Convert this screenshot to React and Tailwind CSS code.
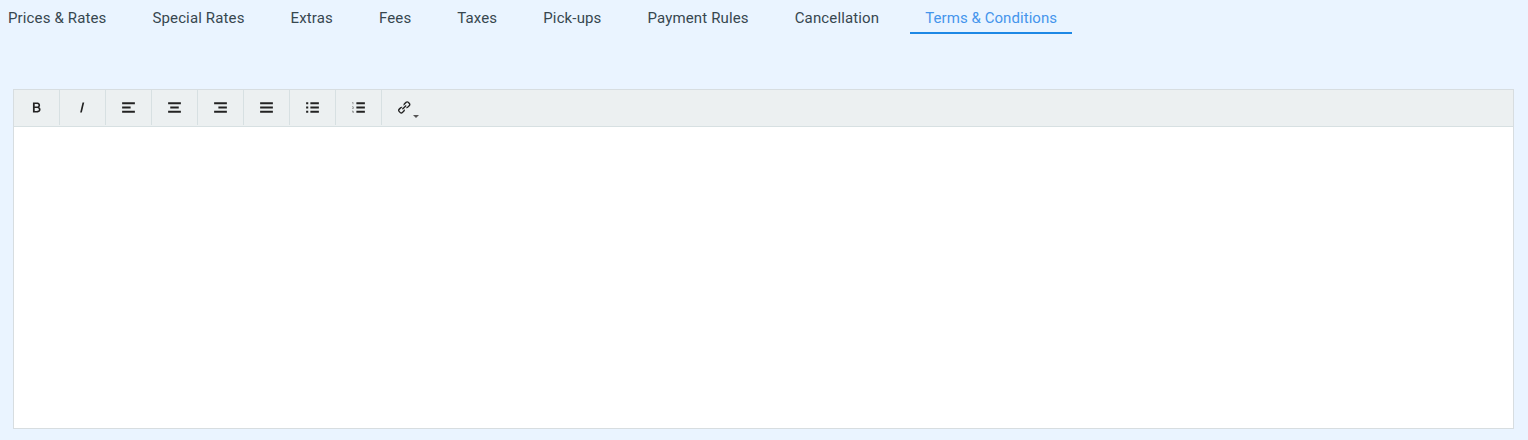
import React from "react";

const tabs = [
  "Prices & Rates",
  "Special Rates",
  "Extras",
  "Fees",
  "Taxes",
  "Pick-ups",
  "Payment Rules",
  "Cancellation",
  "Terms & Conditions",
];

const tools = [
  {
    name: "Bold",
    d: "M51.1 37.8c-1.1-1.4-2.5-2.5-4.2-3.3 1.2-.8 2.1-1.8 2.8-3 1-1.6 1.5-3.5 1.5-5.3 0-2-.6-4-1.7-5.8-1.1-1.8-2.8-3.2-4.8-4.1-2-.9-4.6-1.3-7.8-1.3h-16v42h16.3c2.6 0 4.8-.2 6.7-.7 1.9-.5 3.4-1.2 4.7-2.1 1.3-1 2.4-2.4 3.2-4.1.9-1.7 1.3-3.6 1.3-5.7.2-2.5-.5-4.7-2-6.6zM40.8 50.2c-.6.1-1.8.2-3.4.2h-9V38.5h8.3c2.5 0 4.4.2 5.6.6 1.2.4 2 1 2.7 2 .6.9 1 2 1 3.3 0 1.1-.2 2.1-.7 2.9-.5.9-1 1.5-1.7 1.9-.8.4-1.7.8-2.8 1zm2.6-20.4c-.5.7-1.3 1.3-2.5 1.6-.8.3-2.5.4-4.8.4h-7.7V21.6h7.1c1.4 0 2.6 0 3.6.1s1.7.2 2.2.4c1 .3 1.7.8 2.2 1.7.5.9.8 1.8.8 3-.1 1.3-.4 2.2-.9 3z",
  },
  { name: "Italic", d: "M26 57l10.1-42h7.2L33.2 57H26z" },
  { name: "Align left", d: "M9 14h54v8H9zM9 50h54v8H9zM9 32h36v8H9z" },
  { name: "Align center", d: "M9 14h54v8H9zM9 50h54v8H9zM18 32h36v8H18z" },
  { name: "Align right", d: "M9 14h54v8H9zM9 50h54v8H9zM27 32h36v8H27z" },
  { name: "Justify", d: "M9 14h54v8H9zM9 50h54v8H9zM9 32h54v8H9z" },
  {
    name: "Bulleted list",
    d: "M27 14h36v8H27zM27 50h36v8H27zM9 50h9v8H9zM9 32h9v8H9zM9 14h9v8H9zM27 32h36v8H27z",
  },
  {
    name: "Numbered list",
    d: "M27 14h36v8H27zM27 50h36v8H27zM27 32h36v8H27zM11.8 15.8V22h1.8v-7.8h-1.5l-2.1 1 .3 1.3zM12.1 38.5l.7-.6c1.1-1 2.1-2.1 2.1-3.4 0-1.4-1-2.4-2.7-2.4-1.1 0-2 .4-2.6.8l.5 1.3c.4-.3 1-.6 1.7-.6.9 0 1.3.5 1.3 1.1 0 .9-.9 1.8-2.6 3.3l-1 .9V40H15v-1.5h-2.9zM13.3 53.9c1-.4 1.4-1 1.4-1.8 0-1.1-.9-1.9-2.6-1.9-1 0-1.9.3-2.4.6l.4 1.3c.3-.2 1-.5 1.6-.5.8 0 1.2.3 1.2.8 0 .7-.8.9-1.4.9h-.7v1.3h.7c.8 0 1.6.3 1.6 1.1 0 .6-.5 1-1.4 1-.7 0-1.5-.3-1.8-.5l-.4 1.4c.5.3 1.3.6 2.3.6 2 0 3.2-1 3.2-2.4 0-1.1-.8-1.8-1.7-1.9z",
  },
  {
    name: "Link",
    menu: true,
    d: "M31.1 48.9l-6.7 6.7c-.8.8-1.6.9-2.1.9s-1.4-.1-2.1-.9L15 50.4c-1.1-1.1-1.1-3.1 0-4.2l6.1-6.1.2-.2 6.5-6.5c-1.2-.6-2.5-.9-3.8-.9-2.3 0-4.6.9-6.3 2.6L11 41.8c-3.5 3.5-3.5 9.2 0 12.7l5.2 5.2c1.7 1.7 4 2.6 6.3 2.6s4.6-.9 6.3-2.6l6.7-6.7c2.5-2.6 3.1-6.7 1.5-10l-5.9 5.9zM38.7 22.5l6.7-6.7c.8-.8 1.6-.9 2.1-.9s1.4.1 2.1.9l5.2 5.2c1.1 1.1 1.1 3.1 0 4.2l-6.1 6.1-.2.2L42 38c1.2.6 2.5.9 3.8.9 2.3 0 4.6-.9 6.3-2.6l6.7-6.7c3.5-3.5 3.5-9.2 0-12.7l-5.2-5.2c-1.7-1.7-4-2.6-6.3-2.6s-4.6.9-6.3 2.6l-6.7 6.7c-2.7 2.7-3.3 6.9-1.7 10.2l6.1-6.1zM44.2 30.5c.2-.2.4-.6.4-.9 0-.3-.1-.6-.4-.9l-2.3-2.3c-.3-.2-.6-.4-.9-.4-.3 0-.6.1-.9.4L25.9 40.6c-.2.2-.4.6-.4.9 0 .3.1.6.4.9l2.3 2.3c.2.2.6.4.9.4.3 0 .6-.1.9-.4l14.2-14.2z",
  },
];

function Tab({ label, active }) {
  return (
    <button
      className={
        active
          ? "h-[34px] w-[162px] border-b-2 border-[#1e88e5] px-[15px] pb-[14px] pt-2 leading-5 tracking-[0.06px] text-[#4595ec]"
          : "h-[34px] border-b-2 border-transparent px-[15px] pb-[14px] pt-2 leading-5 text-[#37474f]"
      }
    >
      {label}
    </button>
  );
}

function Tool({ name, d, menu }) {
  return (
    <button
      aria-label={name}
      className="relative flex h-[35px] w-[46px] items-center justify-center border-r border-[#d7e0e2] last:border-transparent"
    >
      <svg viewBox="0 0 72 72" className="size-[17px] fill-[#222222]">
        <path d={d} />
      </svg>
      {menu && (
        <span className="absolute bottom-[7px] right-2 border-x-[3px] border-t-[3px] border-x-transparent border-t-[#555555]" />
      )}
    </button>
  );
}

export default function App() {
  return (
    <div className="flex h-[440px] w-full flex-col overflow-hidden bg-[#eaf4ff] font-['Roboto',sans-serif]">
      <nav className="-ml-[7px] flex gap-4 whitespace-nowrap text-[15px] tracking-[0.137px]">
        {tabs.map((t, i) => (
          <Tab key={t} label={t} active={i === 8} />
        ))}
      </nav>
      <div className="ml-[13px] mr-[14px] mt-[55px] flex h-[340px] flex-col border border-[#d7dde0] bg-white">
        <div className="flex h-[37px] shrink-0 border-b border-[#d7e0e2] bg-[#ecf0f1]">
          {tools.map((t) => (
            <Tool key={t.name} {...t} />
          ))}
        </div>
        <div className="flex-1" contentEditable suppressContentEditableWarning />
      </div>
    </div>
  );
}
